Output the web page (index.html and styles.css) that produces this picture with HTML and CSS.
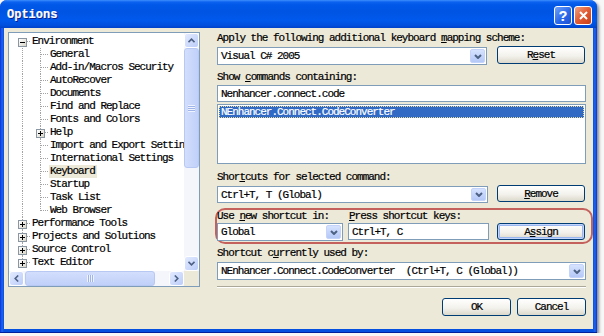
FILE: index.html
```html
<!DOCTYPE html>
<html lang="en">

<head>
    <meta charset="UTF-8">
    <meta name="viewport" content="width=device-width, initial-scale=1.0">
    <title>Options</title>
    <link rel="stylesheet" href="styles.css">
</head>

<body>
    <div class="window">
        <div class="titlebar">
            <span class="title">Options</span>
            <div class="caption-buttons">
                <span class="cap-btn help">?</span>
                <span class="cap-btn close">
                    <svg width="9" height="9" viewBox="0 0 9 9"><path d="M1 1L8 8M8 1L1 8" stroke="#fff" stroke-width="2"/></svg>
                </span>
            </div>
        </div>

        <div class="client">
            <!-- Árvore de categorias -->
            <div class="tree">
                <div class="tree-items">
                    <div class="node"><span class="cell first"><span class="expander minus"></span></span><span class="label">Environment</span></div>
                    <div class="node"><span class="cell pipe"></span><span class="cell tee"></span><span class="label">General</span></div>
                    <div class="node"><span class="cell pipe"></span><span class="cell tee"></span><span class="label">Add-in/Macros Security</span></div>
                    <div class="node"><span class="cell pipe"></span><span class="cell tee"></span><span class="label">AutoRecover</span></div>
                    <div class="node"><span class="cell pipe"></span><span class="cell tee"></span><span class="label">Documents</span></div>
                    <div class="node"><span class="cell pipe"></span><span class="cell tee"></span><span class="label">Find and Replace</span></div>
                    <div class="node"><span class="cell pipe"></span><span class="cell tee"></span><span class="label">Fonts and Colors</span></div>
                    <div class="node"><span class="cell pipe"></span><span class="cell tee"><span class="expander plus"></span></span><span class="label">Help</span></div>
                    <div class="node"><span class="cell pipe"></span><span class="cell tee"></span><span class="label">Import and Export Settings</span></div>
                    <div class="node"><span class="cell pipe"></span><span class="cell tee"></span><span class="label">International Settings</span></div>
                    <div class="node"><span class="cell pipe"></span><span class="cell tee"></span><span class="label selected">Keyboard</span></div>
                    <div class="node"><span class="cell pipe"></span><span class="cell tee"></span><span class="label">Startup</span></div>
                    <div class="node"><span class="cell pipe"></span><span class="cell tee"></span><span class="label">Task List</span></div>
                    <div class="node"><span class="cell pipe"></span><span class="cell elbow"></span><span class="label">Web Browser</span></div>
                    <div class="node"><span class="cell tee"><span class="expander plus"></span></span><span class="label">Performance Tools</span></div>
                    <div class="node"><span class="cell tee"><span class="expander plus"></span></span><span class="label">Projects and Solutions</span></div>
                    <div class="node"><span class="cell tee"><span class="expander plus"></span></span><span class="label">Source Control</span></div>
                    <div class="node"><span class="cell elbow"><span class="expander plus"></span></span><span class="label">Text Editor</span></div>
                </div>

                <div class="vscroll">
                    <span class="sb-btn"><svg width="7" height="5" viewBox="0 0 7 5"><path d="M0.5 4.2L3.5 1.2L6.5 4.2" fill="none" stroke="#4d6185" stroke-width="1.6"/></svg></span>
                    <span class="vthumb"><span class="grip-v"></span></span>
                    <span class="sb-fill"></span>
                    <span class="sb-btn"><svg width="7" height="5" viewBox="0 0 7 5"><path d="M0.5 0.8L3.5 3.8L6.5 0.8" fill="none" stroke="#4d6185" stroke-width="1.6"/></svg></span>
                </div>
                <div class="hscroll">
                    <span class="sb-btn"><svg width="5" height="7" viewBox="0 0 5 7"><path d="M4.2 0.5L1.2 3.5L4.2 6.5" fill="none" stroke="#4d6185" stroke-width="1.6"/></svg></span>
                    <span class="hthumb"><span class="grip-h"></span></span>
                    <span class="sb-fill"></span>
                    <span class="sb-btn"><svg width="5" height="7" viewBox="0 0 5 7"><path d="M0.8 0.5L3.8 3.5L0.8 6.5" fill="none" stroke="#4d6185" stroke-width="1.6"/></svg></span>
                </div>
                <div class="corner"></div>
            </div>

            <!-- Painel do teclado -->
            <div class="panel">
                <div class="field-label">Apply the following additional keyboard <u>m</u>apping scheme:</div>
                <div class="row first-row">
                    <div class="combo scheme"><span class="combo-text">Visual C# 2005</span><span class="drop"><svg width="8" height="5" viewBox="0 0 8 5"><path d="M1 1L4 4L7 1" fill="none" stroke="#4d6185" stroke-width="2"/></svg></span></div>
                    <button class="btn side">R<u>e</u>set</button>
                </div>

                <div class="field-label spaced">Show <u>c</u>ommands containing:</div>
                <div class="textbox search">Nenhancer.connect.code</div>
                <div class="listbox">
                    <div class="list-item selected">NEnhancer.Connect.CodeConverter</div>
                </div>

                <div class="field-label spaced-more">Shor<u>t</u>cuts for selected command:</div>
                <div class="row second-row">
                    <div class="combo shortcuts"><span class="combo-text">Ctrl+T, T (Global)</span><span class="drop"><svg width="8" height="5" viewBox="0 0 8 5"><path d="M1 1L4 4L7 1" fill="none" stroke="#4d6185" stroke-width="2"/></svg></span></div>
                    <button class="btn side"><u>R</u>emove</button>
                </div>

                <div class="assign-group">
                    <div class="group-labels">
                        <span class="field-label scope-label">Use <u>n</u>ew shortcut in:</span>
                        <span class="field-label keys-label"><u>P</u>ress shortcut keys:</span>
                    </div>
                    <div class="group-controls">
                        <div class="combo scope"><span class="combo-text">Global</span><span class="drop"><svg width="8" height="5" viewBox="0 0 8 5"><path d="M1 1L4 4L7 1" fill="none" stroke="#4d6185" stroke-width="2"/></svg></span></div>
                        <div class="textbox keys">Ctrl+T, C</div>
                        <button class="btn default">A<u>s</u>sign</button>
                    </div>
                </div>

                <div class="field-label used-label">Shortcut c<u>u</u>rrently used by:</div>
                <div class="combo used"><span class="combo-text">NEnhancer.Connect.CodeConverter  (Ctrl+T, C (Global))</span><span class="drop"><svg width="8" height="5" viewBox="0 0 8 5"><path d="M1 1L4 4L7 1" fill="none" stroke="#4d6185" stroke-width="2"/></svg></span></div>

                <div class="separator"></div>

                <div class="footer">
                    <button class="btn">OK</button>
                    <button class="btn">Cancel</button>
                </div>
            </div>
        </div>
    </div>
</body>

</html>
```

FILE: styles.css
```css
/* Janela no estilo Windows XP */
* {
    box-sizing: border-box;
}

body {
    margin: 0;
    background-color: #f7f7f7;
    font-family: "Liberation Mono", "Courier New", monospace;
    font-size: 11px;
    letter-spacing: -1px;
    color: #000;
    -webkit-text-stroke: 0.2px;
}

.window {
    width: 597px;
    height: 333px;
    display: flex;
    flex-direction: column;
    border-radius: 7px 7px 0 0;
    overflow: hidden;
    background: linear-gradient(to right, #0831d9 0, #1e64ee 2px, #0650e0 4px, #0650e0 calc(100% - 4px), #1e64ee calc(100% - 2px), #0831d9 100%);
    box-shadow: 2px 2px 3px rgba(0, 0, 0, 0.45), inset 0 -1px #00219c;
}

.titlebar {
    height: 28px;
    flex: none;
    display: flex;
    align-items: center;
    justify-content: space-between;
    padding: 0 5px 0 7px;
    background: linear-gradient(to bottom, #3d8ffb 0, #0c62f0 2px, #0058e8 5px, #0054e3 12px, #0059ec 20px, #0050de 25px, #0042c9 28px);
}

.title {
    color: white;
    font-weight: bold;
    font-size: 12px;
    letter-spacing: 0;
    text-shadow: 1px 1px #0b1c88;
    padding-top: 2px;
}

.caption-buttons {
    display: flex;
    gap: 2px;
    margin-top: 3px;
}

.cap-btn {
    width: 18px;
    height: 19px;
    border: 1px solid #fff;
    border-radius: 3px;
    display: flex;
    align-items: center;
    justify-content: center;
    color: white;
}

.help {
    background: linear-gradient(135deg, #6fa2fa, #2a68ea 55%, #1c50d4);
    font-family: "Liberation Sans", Arial, sans-serif;
    font-weight: bold;
    font-size: 14px;
    letter-spacing: 0;
}

.close {
    background: linear-gradient(135deg, #f0a282, #e25b32 50%, #c73d17);
}

.client {
    flex: 1;
    margin: 0 4px 4px 4px;
    padding: 4px 0 0 4px;
    background-color: #ece9d8;
    display: flex;
    align-items: flex-start;
}

/* Árvore */
.tree {
    width: 192px;
    height: 255px;
    flex: none;
    border: 1px solid #7f9db9;
    background-color: #fff;
    display: grid;
    grid-template-columns: 1fr 15px;
    grid-template-rows: 1fr 15px;
}

.tree-items {
    overflow: hidden;
    padding: 2px 0 0 4px;
}

.node {
    display: flex;
    height: 13px;
    white-space: nowrap;
}

.cell {
    width: 18px;
    height: 13px;
    flex: none;
    display: flex;
    align-items: center;
    padding-left: 5px;
    --dot-v: repeating-linear-gradient(to bottom, #a3a3a3 0 1px, transparent 1px 2px);
    --dot-h: repeating-linear-gradient(to right, #a3a3a3 0 1px, transparent 1px 2px);
}

.pipe {
    background: var(--dot-v) 9px 0 / 1px 13px no-repeat;
}

.tee {
    background: var(--dot-v) 9px 0 / 1px 13px no-repeat, var(--dot-h) 10px 6px / 8px 1px no-repeat;
}

.elbow {
    background: var(--dot-v) 9px 0 / 1px 7px no-repeat, var(--dot-h) 10px 6px / 8px 1px no-repeat;
}

.first {
    background: var(--dot-v) 9px 7px / 1px 6px no-repeat, var(--dot-h) 10px 6px / 8px 1px no-repeat;
}

.expander {
    width: 9px;
    height: 9px;
    border: 1px solid #8a96a2;
    margin-top: 1px;
}

.minus {
    background: linear-gradient(#000, #000) 1px 3px / 5px 1px no-repeat, linear-gradient(135deg, #fff, #d9d6c8);
}

.plus {
    background: linear-gradient(#000, #000) 1px 3px / 5px 1px no-repeat, linear-gradient(#000, #000) 3px 1px / 1px 5px no-repeat, linear-gradient(135deg, #fff, #d9d6c8);
}

.label {
    line-height: 13px;
    padding: 0 2px 0 1px;
}

.label.selected {
    background-color: #ece9d8;
}

/* Barras de rolagem */
.vscroll,
.hscroll {
    display: flex;
    background: #f4f6fc;
}

.vscroll {
    flex-direction: column;
}

.sb-fill {
    flex: 1;
}

.sb-btn {
    width: 15px;
    height: 15px;
    flex: none;
    border: 1px solid #fff;
    border-radius: 3px;
    background: linear-gradient(135deg, #e2eafe, #bccdf9);
    display: flex;
    align-items: center;
    justify-content: center;
}

.vthumb {
    height: 120px;
    flex: none;
    border: 1px solid #b7c8f3;
    border-radius: 3px;
    background: linear-gradient(to right, #d3defc, #c0d0f9);
    display: flex;
    align-items: center;
    justify-content: center;
}

.grip-v {
    width: 7px;
    height: 7px;
    background: repeating-linear-gradient(to bottom, #eef3ff 0 1px, #9fb4e8 1px 2px);
}

.hthumb {
    width: 130px;
    margin-left: 1px;
    flex: none;
    border: 1px solid #b7c8f3;
    border-radius: 3px;
    background: linear-gradient(to bottom, #d3defc, #c0d0f9);
    display: flex;
    align-items: center;
    justify-content: center;
}

.grip-h {
    width: 7px;
    height: 7px;
    background: repeating-linear-gradient(to right, #eef3ff 0 1px, #9fb4e8 1px 2px);
}

.corner {
    background-color: #ece9d8;
}

/* Painel da direita */
.panel {
    width: 369px;
    margin-left: 17px;
    display: flex;
    flex-direction: column;
}

.field-label {
    height: 13px;
    line-height: 13px;
    white-space: nowrap;
}

.spaced {
    margin-top: 6px;
}

.spaced-more {
    margin-top: 7px;
}

.row {
    display: flex;
    align-items: flex-start;
}

.first-row,
.second-row {
    margin-top: 2px;
}

.combo {
    height: 18px;
    border: 1px solid #7f9db9;
    background-color: #fff;
    display: flex;
}

.combo-text {
    flex: 1;
    padding-left: 3px;
    display: flex;
    align-items: center;
    white-space: pre;
    overflow: hidden;
}

.drop {
    width: 15px;
    margin: 1px;
    flex: none;
    border: 1px solid #c4d3fa;
    border-radius: 2px;
    background: linear-gradient(to bottom, #d6e2fe, #b4c8f7);
    display: flex;
    align-items: center;
    justify-content: center;
}

.scheme {
    width: 270px;
}

.shortcuts {
    width: 271px;
    height: 17px;
}

.btn {
    width: 88px;
    height: 18px;
    padding: 0;
    font: inherit;
    letter-spacing: inherit;
    color: #000;
    border: 1px solid #003c74;
    border-radius: 3px;
    background: linear-gradient(to bottom, #fff, #f3f2ec 55%, #dcd8cc);
    display: flex;
    align-items: center;
    justify-content: center;
}

.btn.side {
    margin-left: 10px;
    margin-top: -1px;
}

.second-row .btn.side {
    height: 17px;
    margin-left: 9px;
}

.textbox {
    height: 17px;
    border: 1px solid #7f9db9;
    background-color: #fff;
    padding-left: 3px;
    display: flex;
    align-items: center;
    white-space: nowrap;
}

.search {
    margin-top: 1px;
}

.listbox {
    height: 60px;
    margin-top: 2px;
    border: 1px solid #7f9db9;
    background-color: #fff;
    padding: 1px;
}

.list-item {
    height: 12px;
    line-height: 12px;
    padding-left: 2px;
}

.list-item.selected {
    background-color: #316ac5;
    color: white;
    outline: 1px dotted #e8d89a;
    outline-offset: -1px;
}

/* Grupo destacado em vermelho */
.assign-group {
    height: 36px;
    margin: 5px -7px 0 -2px;
    padding: 0 5px 1px 0;
    border: 2px solid #c4615c;
    border-radius: 10px;
}

.group-labels {
    display: flex;
}

.group-labels .field-label {
    height: 12px;
    line-height: 12px;
}

.scope-label {
    width: 131px;
}

.keys-label {
    padding-left: 1px;
}

.group-controls {
    display: flex;
    align-items: flex-start;
    margin-top: 1px;
}

.scope {
    width: 126px;
}

.keys {
    width: 141px;
    margin-left: 5px;
}

.btn.default {
    height: 17px;
    margin-left: 8px;
    box-shadow: inset 0 0 0 1px #c3d5fb, inset 0 0 0 2px #9ab6f0;
}

.used-label {
    margin-top: 3px;
}

.used {
    margin-top: 2px;
}

.separator {
    height: 2px;
    margin-top: 6px;
    border-top: 1px solid #aca899;
    border-bottom: 1px solid #fff;
}

.footer {
    display: flex;
    justify-content: flex-end;
    gap: 6px;
    margin-top: 10px;
}

.footer .btn {
    width: 69px;
}
```
